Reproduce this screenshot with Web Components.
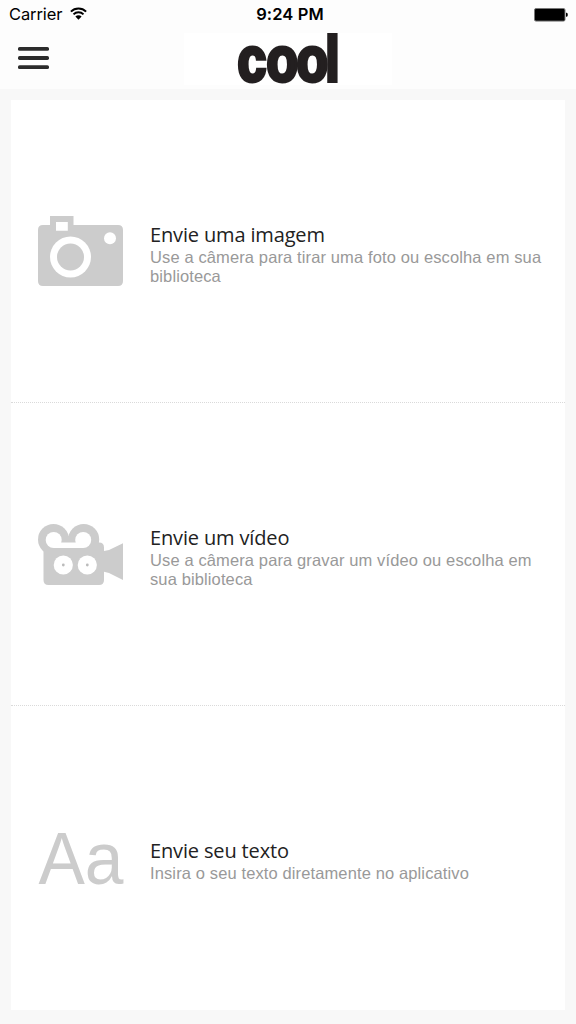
<!DOCTYPE html>
<html lang="pt-BR">
<head>
<meta charset="utf-8">
<title>cool</title>
<style>
html,body{margin:0;height:100%;background:#f8f8f8}
</style>
</head>
<body>
<cool-app></cool-app>
<script>
class Base extends HTMLElement{
  connectedCallback(){
    if(this.shadowRoot)return;
    this.attachShadow({mode:'open'}).innerHTML=this.render();
  }
}
customElements.define('status-bar',class extends Base{
  render(){return `<style>
:host{display:grid;grid-template-columns:1fr auto 1fr;align-items:center;height:29px;padding:0 8px 0 9px;font:16.5px/29px Inter,sans-serif;color:#000}
.l{display:flex;align-items:center;gap:8px}
.carrier{letter-spacing:-.1px}
.t{font-weight:600;font-size:16.5px;padding-left:3px;letter-spacing:.1px}
.r{display:flex;justify-content:flex-end}
svg{display:block}
.wifi{position:relative;top:-1px}
</style>
<div class="l"><span class="carrier">Carrier</span>
<svg class="wifi" width="17" height="13" viewBox="0 0 17 13"><path d="M.9 4.6a10.8 10.8 0 0 1 15.2 0M3.5 7.4a7.1 7.1 0 0 1 10 0" fill="none" stroke="#000" stroke-width="2"/><path d="M8.5 12.7 5.4 9.6a4.4 4.4 0 0 1 6.2 0z"/></svg></div>
<span class="t">9:24 PM</span>
<div class="r"><svg width="34" height="14" viewBox="0 0 34 14"><rect x=".5" y=".5" width="30.5" height="12.6" rx="1.5" fill="#000" stroke="#777"/><path d="M32 4.8h.6q1.2 0 1.2 2t-1.2 2H32z"/></svg></div>`}
});
customElements.define('cool-logo',class extends Base{
  render(){return `<style>:host{display:block;width:208px;height:52px;background:#fff}svg{display:block;overflow:visible}</style>
<svg width="208" height="52" viewBox="0 0 208 52" fill="#231f20" stroke="#231f20" stroke-width="4" font-family="Liberation Sans,sans-serif" font-weight="700" font-size="63">
<text transform="translate(0 48.200) scale(.82 1)" x="65.200 100.700 137.300 172.300">cool</text></svg>`}
});
customElements.define('nav-bar',class extends Base{
  render(){return `<style>
:host{display:grid;grid-template-columns:184px 208px 1fr;height:60px;padding-top:4px;box-sizing:border-box}
button{all:unset;align-self:start;width:31px;margin:14px 0 0 18px}
svg{display:block}
</style><button aria-label="Menu"><svg width="31" height="23" fill="#2b2b2b"><rect width="31" height="3.8" rx="1.6"/><rect y="9.1" width="31" height="3.8" rx="1.6"/><rect y="18.2" width="31" height="3.8" rx="1.6"/></svg></button><cool-logo></cool-logo>`}
});
const icons={
camera:`<svg width="86" height="72" viewBox="0 0 86 72"><path fill="#ccc" fill-rule="evenodd" d="M12 0h23.5v9H80q5 0 5 5v51q0 5-5 5H5q-5 0-5-5V14q0-5 5-5h7zM18 6v8.800h11.800V6z"/><circle cx="32.500" cy="41" r="20.500" fill="#fff"/><circle cx="32.500" cy="41" r="13.500" fill="#ccc"/><circle cx="72" cy="22.200" r="6" fill="#fff"/></svg>`,
video:`<svg width="86" height="62" viewBox="0 0 86 62"><g fill="#ccc"><circle cx="15.5" cy="15.5" r="15.500"/><circle cx="45.700" cy="15.500" r="15.500"/><path d="M27 12h8v10h-8zM5.500 22H58v-3.500h3q5 0 5 5V27l5-1 14-6.800V56l-14-7-5-1.300V56q0 5-5 5H10.500q-5 0-5-5z"/></g><g fill="#fff"><circle cx="15.700" cy="16" r="8"/><circle cx="45.200" cy="16" r="8"/><path d="M15.700 18.500h29.500V24H15.700z"/><circle cx="25.300" cy="41" r="9.600"/><circle cx="49.300" cy="41" r="9.600"/></g><circle cx="25.300" cy="41" r="1.400" fill="#bbb"/><circle cx="49.300" cy="41" r="1.400" fill="#bbb"/></svg>`,
text:`<svg width="86" height="54" viewBox="0 0 86 54" overflow="visible"><text x=".5" y="51.500" fill="#ccc" font-family="Liberation Sans,sans-serif" font-size="74" textLength="85" lengthAdjust="spacingAndGlyphs">Aa</text></svg>`};
customElements.define('option-icon',class extends Base{
  render(){return `<style>:host{display:block}svg{display:block}</style>${icons[this.getAttribute('name')]}`}
});
customElements.define('upload-option',class extends Base{
  render(){return `<style>
:host{display:grid;grid-template-columns:112px 1fr;align-items:center;padding:2px 18px 0 27px;box-sizing:border-box}
.copy{padding-top:4px}
h2{margin:0;font:400 20px/25px "Open Sans","Noto Sans",sans-serif;letter-spacing:-.15px;color:#222}
p{margin:0;padding-top:1px;font:16.500px/19.400px "Liberation Sans",sans-serif;letter-spacing:.12px;color:#999}
</style><option-icon name="${this.getAttribute('icon')}"></option-icon><div class="copy"><h2><slot name="title"></slot></h2><p><slot></slot></p></div>`}
});
customElements.define('cool-app',class extends Base{
  render(){return `<style>
:host{display:flow-root;height:1024px;background:#f8f8f8}
header{background:#fdfdfd;height:89px}
main{display:grid;grid-template-rows:303px 303px 304px;margin:11px 11px 0;background:#fff}
upload-option:not(:last-child){border-bottom:1px dotted #dadada}
</style>
<header><status-bar></status-bar><nav-bar></nav-bar></header>
<main>
<upload-option icon="camera"><span slot="title">Envie uma imagem</span>Use a câmera para tirar uma foto ou escolha em sua<br>biblioteca</upload-option>
<upload-option icon="video"><span slot="title">Envie um vídeo</span>Use a câmera para gravar um vídeo ou escolha em<br>sua biblioteca</upload-option>
<upload-option icon="text"><span slot="title">Envie seu texto</span>Insira o seu texto diretamente no aplicativo</upload-option>
</main>`}
});
</script>
</body>
</html>
